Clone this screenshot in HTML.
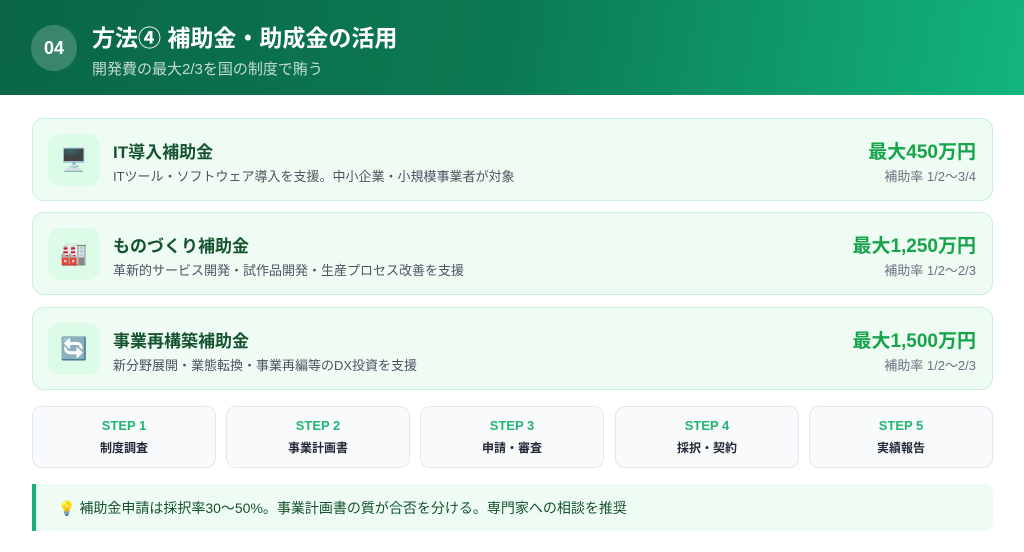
<!DOCTYPE html><html><head><meta charset="utf-8"><style>
*{margin:0;padding:0;box-sizing:border-box}
body{width:1024px;height:552px;background:#fff;font-family:"Liberation Sans","Noto Sans CJK JP",sans-serif;position:relative;overflow:hidden}
.hd{position:absolute;left:0;top:0;width:1024px;height:95px;background:linear-gradient(100deg,#0a6645 0%,#0b7a52 50%,#12b57d 100%)}
.num{position:absolute;left:31px;top:25px;width:46px;height:46px;border-radius:50%;background:rgba(255,255,255,.2);color:#fff;font-weight:bold;font-size:18px;text-align:center;line-height:46px}
.t1{position:absolute;left:92px;top:19px;color:#fff;font-size:23px;font-weight:bold}
.t2{position:absolute;left:92px;top:58px;color:rgba(255,255,255,.75);font-size:15px}
.card{position:absolute;left:32px;width:961px;height:83px;background:#effcf4;border:1.5px solid #c5f2d6;border-radius:12px}
.ic{position:absolute;left:15px;top:15px;width:52px;height:52px;border-radius:12px;background:#dcfce7;font-size:22px;text-align:center;line-height:52px}
.ct{position:absolute;left:80px;top:19px;font-size:17px;font-weight:bold;color:#14532d}
.cd{position:absolute;left:80px;top:47px;font-size:13px;color:#4b5563}
.am{position:absolute;right:16px;top:18px;font-size:19px;font-weight:bold;color:#16a34a}
.rt{position:absolute;right:16px;top:47px;font-size:13px;color:#6b7280}
.st{position:absolute;top:406px;width:184px;height:62px;background:#f8fafc;border:1.5px solid #e2e8f0;border-radius:10px;text-align:center}
.st b{display:block;color:#22b573;font-size:13px;margin-top:11px}
.st span{display:block;color:#1f2937;font-size:12px;font-weight:bold;margin-top:6px}
.tip{position:absolute;left:32px;top:484px;width:961px;height:47px;background:#effcf4;border-left:4px solid #16b374;border-radius:0 8px 8px 0;font-size:14px;color:#14532d;padding:14px 0 0 22px}
</style></head><body>
<div class="hd"><div class="num">04</div><div class="t1">方法④ 補助金・助成金の活用</div><div class="t2">開発費の最大2/3を国の制度で賄う</div></div>
<div class="card" style="top:118px"><div class="ic">🖥️</div><div class="ct">IT導入補助金</div><div class="cd">ITツール・ソフトウェア導入を支援。中小企業・小規模事業者が対象</div><div class="am">最大450万円</div><div class="rt">補助率 1/2〜3/4</div></div>
<div class="card" style="top:212px"><div class="ic">🏭</div><div class="ct">ものづくり補助金</div><div class="cd">革新的サービス開発・試作品開発・生産プロセス改善を支援</div><div class="am">最大1,250万円</div><div class="rt">補助率 1/2〜2/3</div></div>
<div class="card" style="top:307px"><div class="ic">🔄</div><div class="ct">事業再構築補助金</div><div class="cd">新分野展開・業態転換・事業再編等のDX投資を支援</div><div class="am">最大1,500万円</div><div class="rt">補助率 1/2〜2/3</div></div>
<div class="st" style="left:32px"><b>STEP 1</b><span>制度調査</span></div>
<div class="st" style="left:226px"><b>STEP 2</b><span>事業計画書</span></div>
<div class="st" style="left:420px"><b>STEP 3</b><span>申請・審査</span></div>
<div class="st" style="left:615px"><b>STEP 4</b><span>採択・契約</span></div>
<div class="st" style="left:809px"><b>STEP 5</b><span>実績報告</span></div>
<div class="tip">💡 補助金申請は採択率30〜50%。事業計画書の質が合否を分ける。専門家への相談を推奨</div>
</body></html>
